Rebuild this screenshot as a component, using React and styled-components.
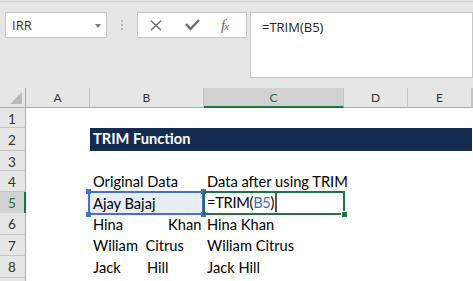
import React from 'react';
import styled, { createGlobalStyle } from 'styled-components';

const Global = createGlobalStyle`
  html, body { margin: 0; padding: 0; background: #fff; }
  #root { width: 473px; height: 281px; overflow: hidden; }
`;

const COLS = '26px 64px 114px 140px 64px 64px 1fr';
const GREEN = '#217346';
const BLUE = '#4472c4';

const Page = styled.div`
  width: 473px;
  height: 281px;
  overflow: hidden;
  background: #e6e6e6;
  padding-top: 1px;
  box-sizing: border-box;
`;

const Toolbar = styled.div`
  height: 87px;
  box-sizing: border-box;
  border-top: 1px solid #cfcfcf;
  display: flex;
  align-items: flex-start;
  padding: 10px 0 0 5px;
  font-family: "Open Sans", "Liberation Sans", sans-serif;
`;

const NameBox = styled.div`
  width: 102px;
  height: 26px;
  box-sizing: border-box;
  background: #fff;
  border: 1px solid #c6c6c6;
  display: flex;
  align-items: center;
  justify-content: space-between;
  padding: 0 5px 0 6px;
  font-size: 13px;
  color: #333;
`;

const Caret = styled.span`
  width: 0;
  height: 0;
  border-left: 3.5px solid transparent;
  border-right: 3.5px solid transparent;
  border-top: 4px solid #7a7a7a;
  margin-top: 1px;
`;

const Grip = styled.div`
  width: 30px;
  height: 26px;
  display: flex;
  flex-direction: column;
  align-items: center;
  justify-content: center;
  gap: 2px;
  box-sizing: border-box;
`;

const Dot = styled.span`
  width: 2px;
  height: 2px;
  background: #b3b3b3;
`;

const FxButtons = styled.div`
  width: 110px;
  height: 26px;
  box-sizing: border-box;
  background: #fff;
  border: 1px solid #c6c6c6;
  display: flex;
  align-items: center;
  padding-left: 12px;
`;

const IconSlot = styled.span`
  width: ${p => p.$w}px;
  display: flex;
  align-items: center;
  justify-content: flex-start;
`;

const FxLabel = styled.span`
  font-family: "Liberation Serif", "DejaVu Serif", serif;
  font-style: italic;
  color: #6a6a6a;
  font-size: 15px;
  line-height: 1;
  display: flex;
  align-items: baseline;
`;

const FxSub = styled.span`
  font-size: 11px;
  margin-left: -1px;
`;

const FormulaInput = styled.div`
  margin-left: 3px;
  width: 223px;
  height: 66px;
  box-sizing: border-box;
  background: #fff;
  border: 1px solid #c6c6c6;
  padding: 5px 0 0 11px;
  font-size: 13px;
  color: #262626;
  line-height: 18px;
`;

const Sheet = styled.div`
  font-family: Lato, "Liberation Sans", sans-serif;
`;

const SheetRow = styled.div`
  display: grid;
  grid-template-columns: ${COLS};
  height: ${p => p.$h}px;
  background: #fff;
`;

const HeaderRow = styled.div`
  display: grid;
  grid-template-columns: ${COLS};
  height: 20px;
  background: #e6e6e6;
`;

const Corner = styled.div`
  box-sizing: border-box;
  border-right: 1px solid #ababab;
  border-bottom: 1px solid #ababab;
  display: flex;
  align-items: flex-end;
  justify-content: flex-end;
  padding: 0 3px 3px 0;
`;

const ColHead = styled.div`
  box-sizing: border-box;
  border-right: 1px solid #c4c4c4;
  border-bottom: ${p => (p.$active ? `2px solid ${GREEN}` : '1px solid #ababab')};
  background: ${p => (p.$active ? '#d2d2d2' : '#e6e6e6')};
  color: ${p => (p.$active ? GREEN : '#333')};
  display: flex;
  align-items: center;
  justify-content: center;
  font-size: 12px;
  padding-top: ${p => (p.$active ? 1 : 0)}px;
`;

const RowHead = styled.div`
  box-sizing: border-box;
  background: ${p => (p.$active ? '#d2d2d2' : '#e6e6e6')};
  color: ${p => (p.$active ? GREEN : '#333')};
  border-right: ${p => (p.$active ? `2px solid ${GREEN}` : '1px solid #ababab')};
  border-bottom: 1px solid #c4c4c4;
  display: flex;
  align-items: center;
  justify-content: center;
  font-size: 13.5px;
  padding-top: 2px;
  padding-right: ${p => (p.$active ? 0 : 1)}px;
`;

const Cell = styled.div`
  position: relative;
  display: flex;
  align-items: flex-end;
  padding: 0 0 2px 3px;
  font-size: 14.67px;
  line-height: 17px;
  white-space: pre;
  color: #000;
  min-width: 0;
  background: ${p => (p.$refd ? '#e8eef8' : 'transparent')};
`;

const Banner = styled.div`
  grid-column: 3 / 7;
  background: #142c52;
  color: #fff;
  font-weight: 700;
  font-size: 14.67px;
  line-height: 17px;
  display: flex;
  align-items: flex-end;
  padding: 0 0 4px 3px;
  white-space: pre;
`;

const RefFrame = styled.div`
  position: absolute;
  top: -1px;
  bottom: -1px;
  left: -2px;
  right: 0;
  border: 2px solid ${BLUE};
  pointer-events: none;
`;

const Handle = styled.span`
  position: absolute;
  width: 5px;
  height: 5px;
  background: ${p => p.$color};
  ${p => (p.$top ? 'top: -4px;' : 'bottom: -4px;')}
  ${p => (p.$left ? 'left: -4px;' : 'right: -4px;')}
  ${p => (p.$ring ? 'outline: 1px solid #fff;' : '')}
`;

const ActiveFrame = styled.div`
  position: absolute;
  top: -1px;
  bottom: -1px;
  left: -1px;
  right: -1px;
  border: 2px solid ${GREEN};
  pointer-events: none;
`;

const FormulaText = styled.span`
  letter-spacing: -0.3px;
`;

const RefText = styled.span`
  color: #3a6cc8;
`;

const TextCaret = styled.span`
  display: inline-block;
  width: 1.5px;
  height: 19.5px;
  background: #555;
  vertical-align: -3.5px;
  margin-left: 1px;
`;

const rows = [
  { n: 1, h: 20 },
  { n: 2, h: 23, banner: 'TRIM Function' },
  { n: 3, h: 20 },
  { n: 4, h: 21, b: 'Original Data', c: 'Data after using TRIM' },
  { n: 5, h: 21, b: 'Ajay Bajaj', active: true },
  { n: 6, h: 21.5, b: 'Hina            Khan', c: 'Hina Khan' },
  { n: 7, h: 21.5, b: 'Wiliam  Citrus', c: 'Wiliam Citrus' },
  { n: 8, h: 21.5, b: 'Jack       Hill', c: 'Jack Hill' },
  { n: '', h: 21.5 },
];

const cols = ['A', 'B', 'C', 'D', 'E', 'F'];

function CloseIcon() {
  return (
    <svg width="12" height="11" viewBox="0 0 12 11">
      <path d="M1 0.7 L11 10.3 M11 0.7 L1 10.3" stroke="#6a6a6a" strokeWidth="1.5" fill="none" />
    </svg>
  );
}

function CheckIcon() {
  return (
    <svg width="15" height="12" viewBox="0 0 15 12">
      <path d="M1 5 L5.5 10 L14 1" stroke="#6a6a6a" strokeWidth="2.4" fill="none" />
    </svg>
  );
}

function CornerTriangle() {
  return (
    <svg width="12" height="12" viewBox="0 0 12 12">
      <polygon points="12,0 12,12 0,12" fill="#b9b9b9" />
    </svg>
  );
}

export default function App() {
  return (
    <Page>
      <Global />
      <Toolbar>
        <NameBox>
          <span>IRR</span>
          <Caret />
        </NameBox>
        <Grip>
          <Dot />
          <Dot />
          <Dot />
        </Grip>
        <FxButtons>
          <IconSlot $w={35}><CloseIcon /></IconSlot>
          <IconSlot $w={36}><CheckIcon /></IconSlot>
          <FxLabel>f<FxSub>x</FxSub></FxLabel>
        </FxButtons>
        <FormulaInput>=TRIM(B5)</FormulaInput>
      </Toolbar>
      <Sheet>
        <HeaderRow>
          <Corner><CornerTriangle /></Corner>
          {cols.map(c => (
            <ColHead key={c} $active={c === 'C'}>{c === 'F' ? '' : c}</ColHead>
          ))}
        </HeaderRow>
        {rows.map((r, i) => (
          <SheetRow key={i} $h={r.h}>
            <RowHead $active={r.active}>{r.n}</RowHead>
            <Cell />
            {r.banner ? (
              <Banner>{r.banner}</Banner>
            ) : (
              <>
                <Cell $refd={r.active}>
                  {r.b || ''}
                  {r.active && (
                    <RefFrame>
                      <Handle $color={BLUE} $top $left />
                      <Handle $color={BLUE} $top />
                      <Handle $color={BLUE} $left />
                      <Handle $color={BLUE} />
                    </RefFrame>
                  )}
                </Cell>
                <Cell>
                  {r.active ? (
                    <FormulaText>
                      =TRIM(<RefText>B5</RefText>)<TextCaret />
                    </FormulaText>
                  ) : (
                    r.c || ''
                  )}
                  {r.active && (
                    <ActiveFrame>
                      <Handle $color={GREEN} $ring />
                    </ActiveFrame>
                  )}
                </Cell>
                <Cell />
                <Cell />
              </>
            )}
            <Cell />
          </SheetRow>
        ))}
      </Sheet>
    </Page>
  );
}
